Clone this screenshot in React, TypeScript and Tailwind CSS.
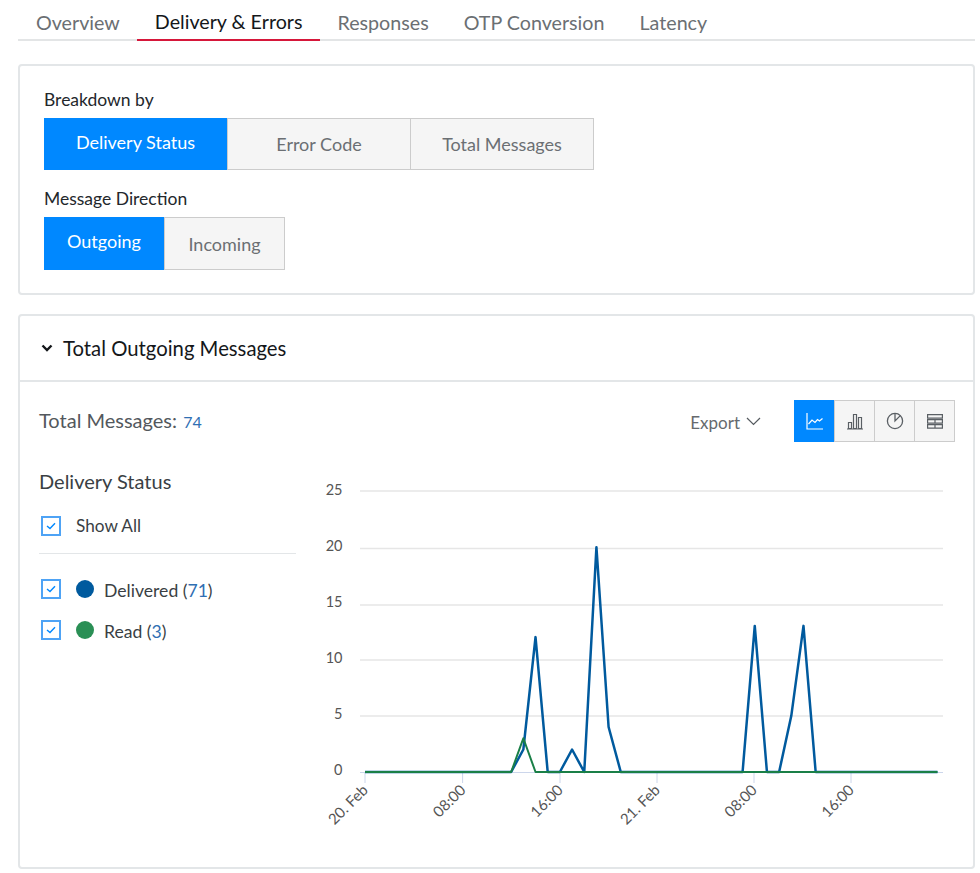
const TABS = ["Overview", "Delivery & Errors", "Responses", "OTP Conversion", "Latency"];

const X0 = 365;
const HOUR = 12.18;
const Y0 = 772;
const UNIT = 11.24;

const delivered: Record<number, number> = { 13: 2, 14: 12, 17: 2, 19: 20, 20: 4, 32: 13, 35: 5, 36: 13 };
const read: Record<number, number> = { 13: 3 };

function linePoints(values: Record<number, number>) {
  const pts: string[] = [];
  for (let h = 0; h <= 47; h++) {
    pts.push(`${X0 + h * HOUR - 320},${Y0 - (values[h] ?? 0) * UNIT - 470}`);
  }
  return pts.join(" ");
}

function SegmentButton({ label, active, className }: { label: string; active?: boolean; className: string }) {
  return (
    <button
      className={
        className +
        " flex items-center justify-center text-[18px] " +
        (active
          ? "bg-[#0088ff] text-white pb-[4px]"
          : "bg-[#f5f5f5] text-[#6b6f73] border border-[#cccccc] pt-[1px]")
      }
    >
      {label}
    </button>
  );
}

function Checkbox() {
  return (
    <span className="flex h-[20px] w-[20px] shrink-0 items-center justify-center border-2 border-[#4ea3f5] bg-white">
      <svg width="10" height="8" viewBox="0 0 10 8" fill="none" stroke="#0088ff" strokeWidth="1.4">
        <path d="M1 4l3 2.6L9 1.2" />
      </svg>
    </span>
  );
}

function LegendRow({ color, label, count }: { color: string; label: string; count: number }) {
  return (
    <div className="flex h-[20px] items-center">
      <Checkbox />
      <span className={"ml-[15px] h-[18px] w-[18px] rounded-full " + color} />
      <span className="ml-[10px] pt-[5px] text-[17.6px] text-[#3a3f44]">
        {label} (<span className="text-[#2f6fb3]">{count}</span>)
      </span>
    </div>
  );
}

function ViewButton({ active, children }: { active?: boolean; children: React.ReactNode }) {
  return (
    <span
      className={
        "flex h-[42px] items-center justify-center " +
        (active ? "w-[41px] bg-[#0088ff]" : "w-[41px] -ml-px border border-[#cccccc] bg-[#f5f5f5]")
      }
    >
      {children}
    </span>
  );
}

function Chart() {
  const grid = [491, 548.5, 605, 660, 716];
  const yLabels = ["25", "20", "15", "10", "5", "0"];
  const yPos = [491, 547, 603, 659, 715, 771];
  const ticks = [
    { x: 365, label: "20. Feb" },
    { x: 462.6, label: "08:00" },
    { x: 560, label: "16:00" },
    { x: 657, label: "21. Feb" },
    { x: 754, label: "08:00" },
    { x: 851, label: "16:00" },
  ];
  return (
    <svg width="640" height="370" className="block" fontFamily="Lato, sans-serif">
      {grid.map((y) => (
        <line key={y} x1={40} x2={623} y1={y - 470} y2={y - 470} stroke="#e6e6e6" strokeWidth="1.3" />
      ))}
      <line x1={40} x2={623} y1={302.5} y2={302.5} stroke="#ccd6eb" />
      {ticks.map((t) => (
        <line key={t.x} x1={t.x - 320} x2={t.x - 320} y1={302} y2={313} stroke="#ccd6eb" />
      ))}
      {yLabels.map((l, i) => (
        <text key={l} x={22.5} y={yPos[i] - 470 + 4} textAnchor="end" fontSize="14.5" fill="#555555">
          {l}
        </text>
      ))}
      {ticks.map((t) => (
        <text
          key={t.x + t.label}
          x={t.x - 320 + 4}
          y={321}
          textAnchor="end"
          fontSize="15"
          fill="#555555"
          transform={`rotate(-45 ${t.x - 320 + 4} 321)`}
        >
          {t.label}
        </text>
      ))}
      <polyline points={linePoints(delivered)} fill="none" stroke="#005a9e" strokeWidth="2.5" strokeLinejoin="round" />
      <polyline points={linePoints(read)} fill="none" stroke="#1a7f47" strokeWidth="2" strokeLinejoin="round" />
    </svg>
  );
}

export default function App() {
  return (
    <div className="h-[873px] w-[980px] overflow-hidden bg-white pl-[18px] pr-[5px] font-['Lato',sans-serif]">
      <div className="flex h-[41px] items-end border-b-2 border-[#e3e5e6] pl-[0.5px]">
        {TABS.map((t) => (
          <div
            key={t}
            className={
              "-mb-[2px] flex h-[41px] items-center px-[17.5px] pt-[5px] text-[19.7px] " +
              (t === "Delivery & Errors"
                ? "border-b-2 border-[#d6173a] text-[#14171a]"
                : "text-[#6b6f73]")
            }
          >
            {t}
          </div>
        ))}
      </div>

      <div className="mt-[23px] h-[231px] rounded-[4px] border-2 border-[#e3e6e8] px-[24px] pt-[23px]">
        <div className="text-[17.5px] leading-[22px] text-[#23272b]">Breakdown by</div>
        <div className="mt-[7px] flex">
          <SegmentButton label="Delivery Status" active className="h-[52px] w-[183px]" />
          <SegmentButton label="Error Code" className="h-[52px] w-[184px]" />
          <SegmentButton label="Total Messages" className="h-[52px] w-[184px] -ml-px" />
        </div>
        <div className="mt-[18px] text-[17.5px] leading-[22px] text-[#23272b]">Message Direction</div>
        <div className="mt-[7px] flex">
          <SegmentButton label="Outgoing" active className="h-[53px] w-[120px]" />
          <SegmentButton label="Incoming" className="h-[53px] w-[121px]" />
        </div>
      </div>

      <div className="mt-[19px] h-[555px] rounded-[4px] border-2 border-[#e3e6e8]">
        <div className="flex h-[66px] items-center border-b-2 border-[#e3e6e8] pl-[21px]">
          <svg width="12" height="8" viewBox="0 0 12 8" fill="none" stroke="#14171a" strokeWidth="2.4">
            <path d="M1.5 1.5L6 6l4.5-4.5" />
          </svg>
          <span className="ml-[10px] text-[20.3px] text-[#14171a]">Total Outgoing Messages</span>
        </div>

        <div className="flex items-start justify-between pl-[19px] pr-[18px] pt-[18px]">
          <div className="pt-[7px] text-[20px] leading-[26px] text-[#53585d]">
            Total Messages: <span className="ml-[1px] text-[16px] text-[#2f6fb3]">74</span>
          </div>
          <div className="flex items-center">
            <span className="pt-[4px] text-[17px] text-[#666a6e]">Export</span>
            <svg className="ml-[6px] mr-[33px]" width="15" height="9" viewBox="0 0 15 9" fill="none" stroke="#555a5f" strokeWidth="1.2">
              <path d="M1 1l6.5 6.5L14 1" />
            </svg>
            <ViewButton active>
              <svg width="18" height="18" viewBox="0 0 18 18" fill="none" stroke="white" strokeWidth="1.2">
                <path d="M1 1v16h16M2.5 12l3.5-4 3 2.5 2.5-3 2 1.5 3-2.5" />
              </svg>
            </ViewButton>
            <ViewButton>
              <svg width="16" height="18" viewBox="0 0 16 18" fill="none" stroke="#5a5f64" strokeWidth="1.2">
                <path d="M1.5 10.5h3v6h-3zM6.5 2.5h3v14h-3zM11.5 5.5h3v11h-3zM0 17h16" />
              </svg>
            </ViewButton>
            <ViewButton>
              <svg width="18" height="18" viewBox="0 0 18 18" fill="none" stroke="#5a5f64" strokeWidth="1.3">
                <circle cx="9" cy="9" r="7.6" />
                <path d="M9 1.4V9l5.3-5.4" />
              </svg>
            </ViewButton>
            <ViewButton>
              <svg width="16" height="15" viewBox="0 0 16 15" fill="none" stroke="#5a5f64" strokeWidth="1.2">
                <path d="M.6.6h14.8v3.6H.6zM.6 5.6h14.8v3.6H.6zM.6 10.6h14.8v3.6H.6zM8 5.6v3.6M8 10.6v3.6" />
              </svg>
            </ViewButton>
          </div>
        </div>

        <div className="flex items-start pl-[19px]">
          <div className="w-[257px] shrink-0 pt-[26px]">
            <div className="text-[20px] leading-[26px] text-[#3a3f44]">Delivery Status</div>
            <div className="mt-[22px] flex h-[20px] items-center pl-[2px]">
              <Checkbox />
              <span className="ml-[15px] text-[17.2px] text-[#3a3f44]">Show All</span>
            </div>
            <div className="mt-[17px] h-px bg-[#e3e6e8]" />
            <div className="mt-[25px] flex flex-col gap-[21px] pl-[2px]">
              <LegendRow color="bg-[#005a9e]" label="Delivered" count={71} />
              <LegendRow color="bg-[#2a8f55]" label="Read" count={3} />
            </div>
          </div>
          <div className="ml-[24px] mt-[28px] w-[640px]">
            <Chart />
          </div>
        </div>
      </div>
    </div>
  );
}
